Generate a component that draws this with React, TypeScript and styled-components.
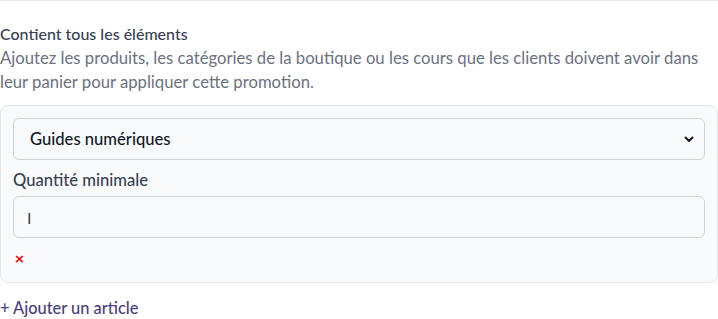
import { FC } from "react"
import styled, { createGlobalStyle } from "styled-components"

const GlobalStyle = createGlobalStyle`
  body {
    margin: 0;
    background: #ffffff;
    font-family: Lato, "Open Sans", sans-serif;
    font-size: 16px;
  }
  * {
    box-sizing: border-box;
  }
`

const Section = styled.section`
  border-top: 1px solid #e5e7eb;
  padding-top: 21px;
  width: 718px;
`
const Title = styled.h3`
  margin: 0;
  font-size: 16px;
  font-weight: 500;
  line-height: 24px;
  color: #374151;
`
const Description = styled.p`
  margin: 0;
  font-size: 16.7px;
  line-height: 24px;
  color: #6b7280;
`
const Panel = styled.div`
  margin-top: 11px;
  background-color: #f9fafb;
  border: 1px solid #e5e7eb;
  border-radius: 8px;
  padding: 12px;
  display: flex;
  flex-direction: column;
`
const Select = styled.div`
  display: flex;
  align-items: center;
  justify-content: space-between;
  height: 42px;
  padding: 0 9px 0 16px;
  border: 1px solid #d1d5db;
  border-radius: 6px;
  background-color: #f9fafb;
  color: #111827;
  font-size: 16.6px;
  font-weight: 500;
  svg {
    width: 12px;
    height: 12px;
  }
`
const Label = styled.label`
  margin-top: 8px;
  line-height: 24px;
  color: #374151;
  font-size: 16.6px;
  font-weight: 500;
`
const Input = styled.div`
  margin-top: 4px;
  display: flex;
  align-items: center;
  height: 42px;
  padding: 0 13px;
  border: 1px solid #d1d5db;
  border-radius: 6px;
  color: #374151;
`
const Remove = styled.button`
  margin-top: 8px;
  align-self: flex-start;
  background: none;
  border: 0;
  padding: 0 0 0 1px;
  height: 24px;
  color: #ef0000;
  font-family: "DejaVu Sans", sans-serif;
  font-size: 13px;
  font-weight: bold;
  cursor: pointer;
`
const AddLink = styled.a`
  display: block;
  margin-top: 13px;
  line-height: 24px;
  color: #4a3d7c;
  font-size: 16.4px;
  font-weight: 500;
  cursor: pointer;
`

const App: FC = () => {
  return (
    <>
      <GlobalStyle />
      <Section>
        <Title>Contient tous les éléments</Title>
        <Description>
          Ajoutez les produits, les catégories de la boutique ou les cours que les clients doivent avoir dans
          <br />
          leur panier pour appliquer cette promotion.
        </Description>
        <Panel>
          <Select>
            <span>Guides numériques</span>
            <svg viewBox='0 0 12 12'>
              <path d='M2.5 4.5 6 8l3.5-3.5' fill='none' stroke='#111827' strokeWidth='2' strokeLinecap='round' strokeLinejoin='round' />
            </svg>
          </Select>
          <Label>Quantité minimale</Label>
          <Input>I</Input>
          <Remove>×</Remove>
        </Panel>
        <AddLink>+ Ajouter un article</AddLink>
      </Section>
    </>
  )
}

export default App
